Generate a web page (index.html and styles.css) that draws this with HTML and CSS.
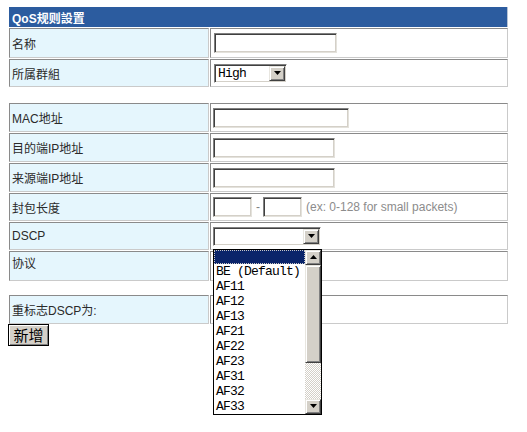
FILE: index.html
```html
<!DOCTYPE html>
<html lang="zh">
<head>
<meta charset="utf-8">
<title>QoS规则設置</title>
<link rel="stylesheet" href="styles.css">
</head>
<body>
<div class="page">
<div class="form t1">
  <div class="head">QoS规则設置</div>
  <div class="lab h30">名称</div>
  <div class="val h30"><input class="txt w123" type="text"></div>
  <div class="lab h28">所属群組</div>
  <div class="val h28">
    <div class="combo w73"><span class="cv">High</span><span class="cb"><svg width="7" height="4" viewBox="0 0 7 4"><path d="M0 0H7L3.5 4Z" fill="#000"/></svg></span></div>
  </div>
</div>

<div class="form t2">
  <div class="lab h29">MAC地址</div>
  <div class="val h29"><input class="txt w136" type="text"></div>
  <div class="lab h29">目的端IP地址</div>
  <div class="val h29"><input class="txt w122" type="text"></div>
  <div class="lab h29">来源端IP地址</div>
  <div class="val h29"><input class="txt w122" type="text"></div>
  <div class="lab h28">封包长度</div>
  <div class="val h28"><input class="txt w39" type="text"><span class="dash">-</span><input class="txt w39" type="text"><span class="hint">(ex: 0-128 for small packets)</span></div>
  <div class="lab h28">DSCP</div>
  <div class="val h28">
    <div class="dd">
      <div class="combo w108"><span class="cv"></span><span class="cb"><svg width="7" height="4" viewBox="0 0 7 4"><path d="M0 0H7L3.5 4Z" fill="#000"/></svg></span></div>
      <div class="list">
        <ul class="items">
          <li class="sel"></li>
          <li>BE (Default)</li>
          <li>AF11</li>
          <li>AF12</li>
          <li>AF13</li>
          <li>AF21</li>
          <li>AF22</li>
          <li>AF23</li>
          <li>AF31</li>
          <li>AF32</li>
          <li>AF33</li>
        </ul>
        <div class="sbar">
          <span class="sbtn"><svg width="7" height="4" viewBox="0 0 7 4"><path d="M0 4H7L3.5 0Z" fill="#000"/></svg></span>
          <span class="thumb"></span>
          <span class="track"></span>
          <span class="sbtn"><svg width="7" height="4" viewBox="0 0 7 4"><path d="M0 0H7L3.5 4Z" fill="#000"/></svg></span>
        </div>
      </div>
    </div>
  </div>
  <div class="lab h30 top">协议</div>
  <div class="val h30"></div>
</div>

<div class="form t3">
  <div class="lab h29">重标志DSCP为:</div>
  <div class="val h29"></div>
</div>
<button class="btn" type="button">新增</button>
</div>
</body>
</html>
```

FILE: styles.css
```css
html, body {
  background: #fff;
}
body {
  margin: 6px 8px;
  font-family: "Liberation Sans", "Noto Sans CJK SC", sans-serif;
  font-size: 12px;
  color: #2a2a2a;
}
.page {
  min-height: 418px;
}
.form {
  display: grid;
  grid-template-columns: 200px 298px;
  gap: 1px;
  padding: 1px;
  width: max-content;
}
.t2 { margin-top: 14px; }
.t3 { margin-top: 12px; padding-bottom: 0; }

.head {
  grid-column: 1 / 3;
  height: 20px;
  background: #2c5c9f;
  color: #fff;
  font-weight: bold;
  display: flex;
  align-items: center;
  padding-left: 3px;
  box-sizing: border-box;
  border-right: 1px solid #b8c4d4;
}
.lab, .val {
  box-sizing: border-box;
  border: 1px solid;
  border-color: #8a8a8a #cacaca #cacaca #8a8a8a;
  display: flex;
  align-items: center;
  padding-left: 2px;
}
.lab {
  background: #e5f6fd;
}
.val {
  background: #fff;
}
.lab.top {
  align-items: flex-start;
  padding-top: 2px;
}
.h28 { height: 28px; }
.h29 { height: 29px; }
.h30 { height: 30px; }

.txt {
  box-sizing: border-box;
  height: 20px;
  margin: 0;
  padding: 0 2px;
  border: 1px solid;
  border-color: #808080 #e4e2dc #e4e2dc #808080;
  box-shadow: inset 1px 1px 0 #404040, inset -1px -1px 0 #d4d0c8;
  background: #fff;
  outline: none;
}
.w123 { width: 123px; margin-left: 1px; }
.w136 { width: 136px; }
.w122 { width: 122px; }
.w39 { width: 39px; }
.dash {
  margin: 0 3px 0 4px;
  color: #808080;
}
.hint {
  margin-left: 4px;
  color: #8c8c8c;
}

.combo {
  box-sizing: border-box;
  height: 19px;
  display: flex;
  border: 1px solid;
  border-color: #808080 #fff #fff #808080;
  box-shadow: inset 1px 1px 0 #404040, inset -1px -1px 0 #d4d0c8;
  padding: 1px;
  background: #fff;
}
.w73 { width: 73px; margin-left: 1px; }
.w108 { width: 108px; }
.cv {
  flex: 1;
  font-family: "Liberation Mono", monospace;
  font-size: 13px;
  letter-spacing: -0.8px;
  color: #000;
  line-height: 15px;
  padding-left: 2px;
}
.cb, .sbtn {
  box-sizing: border-box;
  width: 16px;
  height: 15px;
  flex: none;
  display: flex;
  align-items: center;
  justify-content: center;
  background: #d4d0c8;
  border: 1px solid;
  border-color: #e8e6e0 #404040 #404040 #e8e6e0;
  box-shadow: inset 1px 1px 0 #fff, inset -1px -1px 0 #808080;
}

.dd {
  position: relative;
}
.list {
  position: absolute;
  z-index: 2;
  left: 0;
  top: 22px;
  width: 109px;
  height: 166px;
  box-sizing: border-box;
  border: 1px solid #000;
  background: #fff;
  display: flex;
}
.items {
  list-style: none;
  margin: 0;
  padding: 0;
  flex: 1;
  font-family: "Liberation Mono", monospace;
  font-size: 13px;
  letter-spacing: -0.8px;
  color: #000;
}
.items li {
  height: 15px;
  line-height: 15px;
  padding-left: 2px;
  white-space: pre;
}
.items li.sel {
  height: 14px;
  background: #0a246a;
  outline: 1px dotted #c8c8c8;
  outline-offset: -1px;
}
.sbar {
  width: 16px;
  display: flex;
  flex-direction: column;
}
.thumb {
  box-sizing: border-box;
  height: 98px;
  flex: none;
  background: #d4d0c8;
  border: 1px solid;
  border-color: #e8e6e0 #404040 #404040 #e8e6e0;
  box-shadow: inset 1px 1px 0 #fff, inset -1px -1px 0 #808080;
}
.track {
  flex: 1;
  background: repeating-conic-gradient(#d4d0c8 0 25%, #fff 0 50%) 0 0 / 2px 2px;
}

.btn {
  display: block;
  box-sizing: border-box;
  width: 41px;
  height: 22px;
  margin: 0;
  padding: 0;
  background: #d4d0c8;
  border: 1px solid #000;
  box-shadow: inset 1px 1px 0 #fff, inset -1px -1px 0 #808080;
  font-family: "Noto Sans CJK SC", sans-serif;
  font-size: 15px;
  line-height: 18px;
  color: #000;
}
```
